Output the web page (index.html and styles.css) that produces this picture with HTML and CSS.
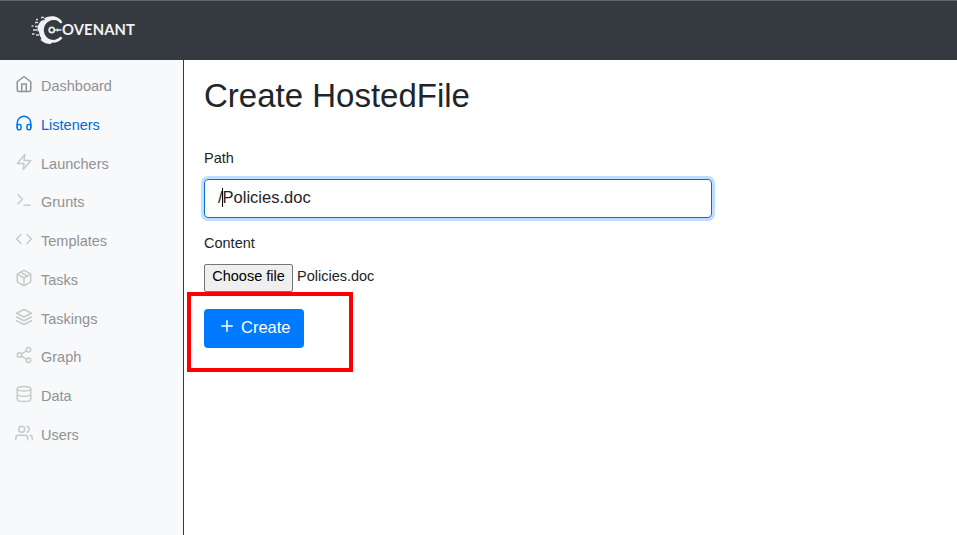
FILE: index.html
```html
<!DOCTYPE html>
<html lang="en">
<head>
<meta charset="utf-8">
<title>Covenant</title>
<link rel="stylesheet" href="styles.css">
</head>
<body>
<header class="topbar">
  <svg class="logo" width="108" height="32" viewBox="0 0 108 32">
    <path fill="#f1f1f2" d="M32.500 8.200C28.500 1.500 20 .8 14 4.500L15 6 11.500 6.500C8.500 9.500 7 13 7.500 17.500L9 17.200C9 20 10 22.500 11.500 24.500L10.500 26C13 28.500 17 30.200 21 30L21.500 28.800C26 29.200 30 27.500 32.500 24L30.500 22.600C25.500 28 17.500 26.500 14.800 20.500 11.500 12.500 17.500 5.500 24.500 6 27 6.200 29 7.500 30.500 9.500z"/>
    <path fill="none" stroke="#d8d9da" stroke-width="1.600" d="M5 8.500h3M1.500 12h2M5 12.500h3M3 16h4M2 20h2.500M6 21h3M6 5.500h2M11 3.500h3"/>
    <circle cx="21.800" cy="16" r="2.600" fill="none" stroke="#e8e8e9" stroke-width="1.800"/>
    <path fill="none" stroke="#e8e8e9" stroke-width="1.300" d="M24.500 16h7M27.500 14.500v3"/>
    <text class="wordmark" x="32" y="21.200" textLength="73">OVENANT</text>
  </svg>
</header>
<div class="shell">
  <nav class="sidebar">
    <a class="item strong"><svg class="icon" viewBox="0 0 24 24"><path d="M3 9l9-7 9 7v11a2 2 0 0 1-2 2H5a2 2 0 0 1-2-2z"/><path d="M9 22V12h6v10"/></svg>Dashboard</a>
    <a class="item active"><svg class="icon" viewBox="0 0 24 24"><path d="M3 18v-6a9 9 0 0 1 18 0v6"/><path d="M21 19a2 2 0 0 1-2 2h-1a2 2 0 0 1-2-2v-3a2 2 0 0 1 2-2h3zM3 19a2 2 0 0 0 2 2h1a2 2 0 0 0 2-2v-3a2 2 0 0 0-2-2H3z"/></svg>Listeners</a>
    <a class="item"><svg class="icon" viewBox="0 0 24 24"><path d="M13 2L3 14h9l-1 8 10-12h-9z"/></svg>Launchers</a>
    <a class="item"><svg class="icon" viewBox="0 0 24 24"><path d="M4 17l6-6-6-6M12 19h8"/></svg>Grunts</a>
    <a class="item"><svg class="icon" viewBox="0 0 24 24"><path d="M16 18l6-6-6-6M8 6l-6 6 6 6"/></svg>Templates</a>
    <a class="item"><svg class="icon" viewBox="0 0 24 24"><path d="M16.500 9.400L7.500 4.210M21 16V8a2 2 0 0 0-1-1.730l-7-4a2 2 0 0 0-2 0l-7 4A2 2 0 0 0 3 8v8a2 2 0 0 0 1 1.730l7 4a2 2 0 0 0 2 0l7-4A2 2 0 0 0 21 16z"/><path d="M3.270 6.960L12 12.010l8.730-5.050M12 22.080V12"/></svg>Tasks</a>
    <a class="item"><svg class="icon" viewBox="0 0 24 24"><path d="M12 2L2 7l10 5 10-5zM2 17l10 5 10-5M2 12l10 5 10-5"/></svg>Taskings</a>
    <a class="item"><svg class="icon" viewBox="0 0 24 24"><circle cx="18" cy="5" r="3"/><circle cx="6" cy="12" r="3"/><circle cx="18" cy="19" r="3"/><path d="M8.590 13.510l6.830 3.980M15.410 6.510l-6.820 3.980"/></svg>Graph</a>
    <a class="item"><svg class="icon" viewBox="0 0 24 24"><ellipse cx="12" cy="5" rx="9" ry="3"/><path d="M21 12c0 1.660-4 3-9 3s-9-1.340-9-3M3 5v14c0 1.660 4 3 9 3s9-1.340 9-3V5"/></svg>Data</a>
    <a class="item"><svg class="icon" viewBox="0 0 24 24"><path d="M17 21v-2a4 4 0 0 0-4-4H5a4 4 0 0 0-4 4v2"/><circle cx="9" cy="7" r="4"/><path d="M23 21v-2a4 4 0 0 0-3-3.870M16 3.130a4 4 0 0 1 0 7.750"/></svg>Users</a>
  </nav>
  <main class="content">
    <h1 class="title">Create HostedFile</h1>
    <div class="label">Path</div>
    <div class="field" role="textbox">/<span class="caret"></span>Policies.doc</div>
    <div class="label">Content</div>
    <div class="file"><button class="choose">Choose file</button><span>Policies.doc</span></div>
    <div class="action">
      <button class="create"><svg class="plus" viewBox="0 0 24 24"><path d="M12 5v14M5 12h14"/></svg>Create</button>
      <div class="highlight"></div>
    </div>
  </main>
</div>
</body>
</html>
```
FILE: styles.css
```css
* { box-sizing: border-box; }
body {
  margin: 0;
  height: 535px;
  overflow: hidden;
  display: flex;
  flex-direction: column;
  background: #fff;
  color: #212529;
  font-family: "Liberation Sans", Arial, sans-serif;
  font-size: 16.5px;
}
.topbar {
  height: 60px;
  flex: none;
  padding: 13px 0 0 30px;
  border-top: 1px solid #62655f;
  background: #343a40;
}
.logo { display: block; }
.wordmark { font: 700 14.800px Lato, sans-serif; fill: #f1f1f2; }
.shell { flex: 1; display: flex; min-height: 0; }
.sidebar {
  width: 184px;
  flex: none;
  padding: 6.750px 0 0 15px;
  background: #f8f9fa;
  border-right: 1px solid #343a40;
}
.item {
  display: flex;
  align-items: center;
  height: 38.750px;
  font-size: 14.500px;
  line-height: 16px;
  color: #919293;
}
.icon {
  width: 18px;
  height: 18px;
  margin: -4px 8px 0 0;
  overflow: visible;
  fill: none;
  stroke: #c8c9c9;
  stroke-width: 2;
  stroke-linecap: round;
  stroke-linejoin: round;
}
.strong .icon { stroke: #919293; }
.active { color: #0069d9; }
.active .icon { stroke: #0073e6; }
.content { flex: 1; padding: 16px 0 0 20px; }
.title {
  margin: 0 0 32px;
  font-size: 33px;
  font-weight: 400;
  line-height: 40px;
}
.label { height: 31px; font-size: 14.500px; line-height: 21px; }
.field {
  display: flex;
  align-items: center;
  width: 508px;
  height: 39px;
  margin-bottom: 15px;
  padding: 0 13px 2px;
  border: 1px solid #0b6bd3;
  border-radius: 4px;
  box-shadow: 0 0 0 3px #bfdeff;
}
.caret { width: 1px; height: 19px; margin: 0 0 0 -1px; background: #000; }
.file { display: flex; height: 28px; font-size: 14.500px; line-height: 24px; }
.choose {
  width: 89px;
  height: 28px;
  margin-right: 4px;
  padding: 0 0 4px;
  border: 1px solid #767676;
  border-radius: 2px;
  background: #efefef;
  color: #000;
  font: inherit;
  line-height: 16px;
  white-space: nowrap;
}
.action { position: relative; margin-top: 17px; }
.create {
  display: flex;
  align-items: center;
  width: 100px;
  height: 39px;
  padding: 0 0 2px 14px;
  border: 0;
  border-radius: 4px;
  background: #007bff;
  color: #fff;
  font: inherit;
}
.plus {
  width: 18px;
  height: 18px;
  margin: -3px 5px 0 0;
  fill: none;
  stroke: #fff;
  stroke-width: 2;
  stroke-linecap: round;
}
.highlight {
  position: absolute;
  left: -17px;
  top: -17px;
  width: 166px;
  height: 80px;
  border: 4px solid #f00;
}
```
